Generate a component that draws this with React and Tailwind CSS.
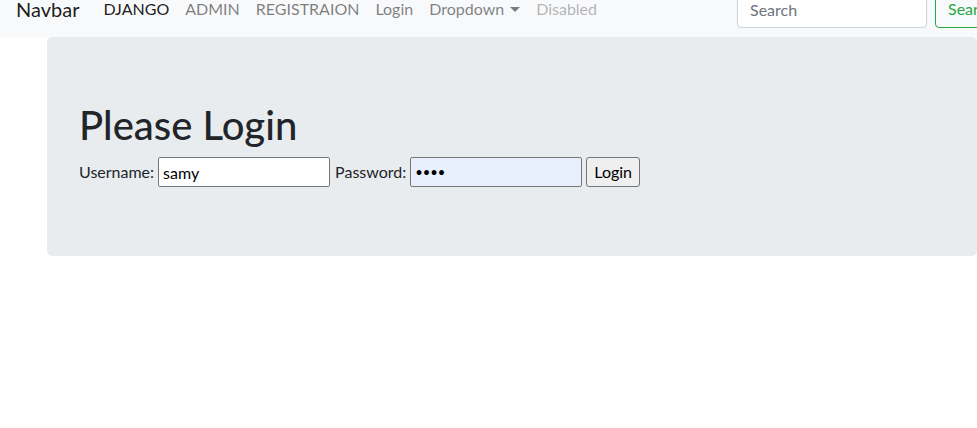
import React from "react";

function App() {
    return (
        <div className="min-h-[428px] w-full overflow-hidden bg-white text-[#212529]" style={{ fontFamily: 'Lato, "Noto Sans", sans-serif' }}>
            {/* Navbar (page scrolled a little, top is cut) */}
            <div className="h-[37px] overflow-hidden bg-[#f8f9fa]">
                <nav className="-mt-[19px] flex h-[56px] items-center whitespace-nowrap px-4">
                    <a href="#" className="mr-4 py-[5px] text-[20px] leading-[30px] text-black/90">
                        Navbar
                    </a>
                    <div className="flex items-center text-[16px] leading-6">
                        <a href="#" className="px-2 text-black/90">DJANGO</a>
                        <a href="#" className="px-2 text-black/50">ADMIN</a>
                        <a href="#" className="px-2 text-black/50">REGISTRAION</a>
                        <a href="#" className="px-2 text-black/50">Login</a>
                        <a href="#" className="flex items-center px-2 text-black/50">
                            Dropdown
                            <span className="ml-[6px] mt-[1px] h-0 w-0 border-x-[5px] border-t-[5px] border-x-transparent border-t-black/50"></span>
                        </a>
                        <a href="#" className="px-2 text-black/30">Disabled</a>
                    </div>
                    <div className="ml-auto flex shrink-0 items-center">
                        <input
                            type="search"
                            placeholder="Search"
                            className="h-[38px] w-[190px] rounded-[4px] border border-[#ced4da] bg-white px-3 text-[16px] placeholder:text-[#6c757d] outline-none"
                        />
                        <button className="ml-2 mr-[-50px] h-[38px] w-[76px] rounded-[4px] border border-[#28a745] px-3 text-left text-[16px] text-[#28a745]">
                            Search
                        </button>
                    </div>
                </nav>
            </div>

            {/* Jumbotron */}
            <div className="ml-[47px] rounded-[5px] bg-[#e9ecef] px-8 pb-[69px] pt-[64px]">
                <h1 className="mb-2 text-[40px] font-medium leading-[48px]">Please Login</h1>
                <form className="flex items-center text-[16px]" onSubmit={(e) => e.preventDefault()}>
                    <label className="mr-1">Username:</label>
                    <input
                        type="text"
                        defaultValue="samy"
                        className="h-[30px] w-[172px] rounded-[2px] border border-[#767676] bg-white px-[4px] text-[16px] text-black outline-none"
                    />
                    <label className="ml-[5px] mr-1">Password:</label>
                    <input
                        type="password"
                        defaultValue="samy"
                        className="h-[30px] w-[172px] rounded-[2px] border border-[#767676] bg-[#e8f0fe] px-[4px] text-[13px] text-black outline-none"
                    />
                    <button className="ml-[4px] h-[30px] rounded-[3px] border border-[#767676] bg-[#efefef] px-[7px] text-[16px] text-black">
                        Login
                    </button>
                </form>
            </div>
        </div>
    );
}

export default App;
